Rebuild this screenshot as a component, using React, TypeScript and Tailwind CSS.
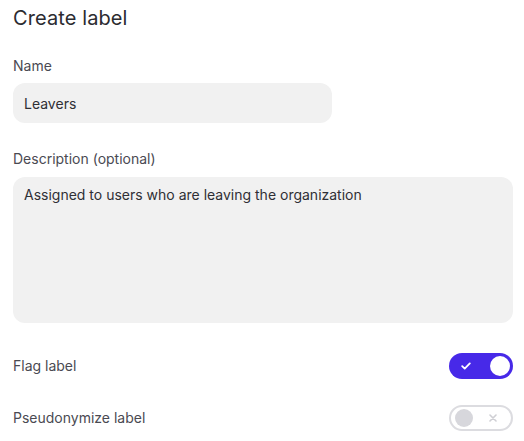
import { useState } from 'react';

function Toggle({ checked, onChange }: { checked: boolean; onChange: (v: boolean) => void }) {
  return (
    <button
      type="button"
      onClick={() => onChange(!checked)}
      className={`relative flex h-[26px] w-[64px] shrink-0 items-center rounded-full ${
        checked ? 'bg-[#4729e8]' : 'border-2 border-[#dcdce0] bg-white'
      }`}
    >
      {checked ? (
        <>
          <svg className="absolute left-[12px] top-[9px]" width="10" height="8" viewBox="0 0 10 8" fill="none">
            <path d="M1.2 4.2 3.7 6.6 8.8 1.4" stroke="white" strokeWidth="1.8" strokeLinecap="round" strokeLinejoin="round" />
          </svg>
          <span className="absolute right-[3px] top-[3px] h-[20px] w-[20px] rounded-full bg-white" />
        </>
      ) : (
        <>
          <span className="absolute left-[4px] top-[2px] h-[18px] w-[18px] rounded-full bg-[#d7d7dc]" />
          <svg className="absolute right-[14px] top-[7px]" width="8" height="8" viewBox="0 0 8 8" fill="none">
            <path d="M1 1 7 7M7 1 1 7" stroke="#cfcfd4" strokeWidth="1.6" strokeLinecap="round" />
          </svg>
        </>
      )}
    </button>
  );
}

export default function App() {
  const [name, setName] = useState('Leavers');
  const [desc, setDesc] = useState('Assigned to users who are leaving the organization');
  const [flag, setFlag] = useState(true);
  const [pseudo, setPseudo] = useState(false);

  return (
    <div className="min-h-[441px] w-[524px] bg-white pl-[13px] pr-[11px] pt-[4px] font-['Inter',sans-serif] text-[#2f2f35]">
      <h1 className="text-[20px] leading-[28px] font-normal tracking-[0.1px] text-[#2b2b30]">Create label</h1>

      <div className="mt-[24px] text-[14px] leading-[20px] text-[#4a4a52]">Name</div>
      <input
        value={name}
        onChange={(e) => setName(e.target.value)}
        className="mt-[7px] h-[40px] w-[319px] rounded-[12px] bg-[#f1f1f1] px-[11px] text-[14px] text-[#2f2f35] outline-none"
      />

      <div className="mt-[26px] text-[14px] leading-[20px] text-[#4a4a52]">Description (optional)</div>
      <textarea
        value={desc}
        onChange={(e) => setDesc(e.target.value)}
        className="mt-[8px] block h-[146px] w-[500px] resize-none rounded-[12px] bg-[#f1f1f1] px-[11px] py-[8px] text-[14px] leading-[20px] text-[#2f2f35] outline-none"
      />

      <div className="mt-[30px] flex w-[500px] items-center justify-between">
        <span className="text-[14px] leading-[20px] text-[#4a4a52]">Flag label</span>
        <Toggle checked={flag} onChange={setFlag} />
      </div>

      <div className="mt-[26px] flex w-[500px] items-center justify-between">
        <span className="text-[14px] leading-[20px] text-[#4a4a52]">Pseudonymize label</span>
        <Toggle checked={pseudo} onChange={setPseudo} />
      </div>
    </div>
  );
}
